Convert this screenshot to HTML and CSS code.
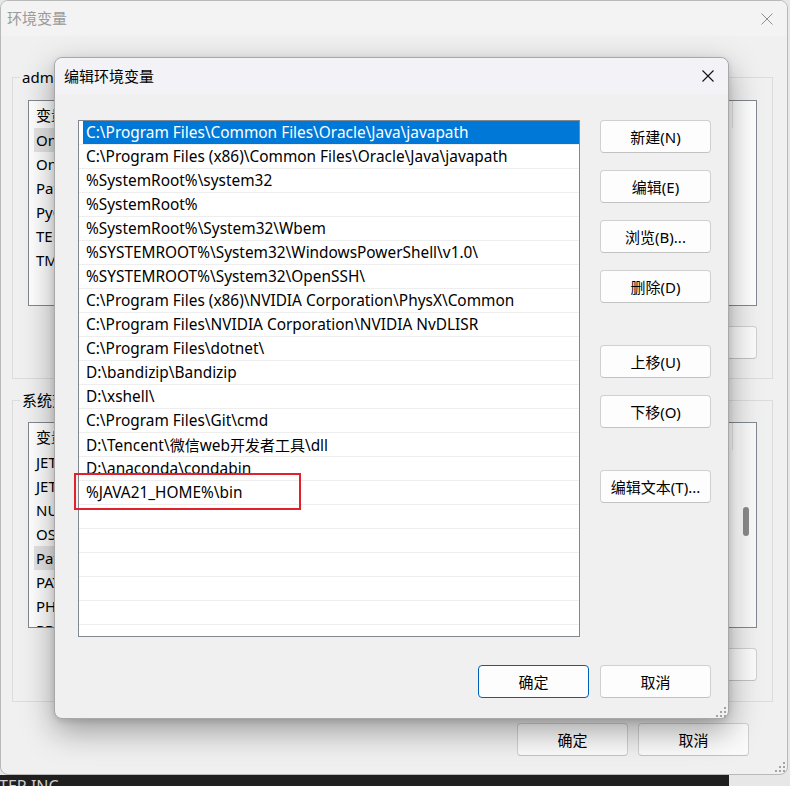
FILE: index.html
```html
<!DOCTYPE html>
<html lang="zh-CN">
<head>
<meta charset="utf-8">
<title>编辑环境变量</title>
<link rel="stylesheet" href="styles.css">
</head>
<body>
<div class="darkwin"><span class="darkwin-text">TER INC</span></div>

<div class="win bgwin">
  <div class="bg-titlebar">
    <span class="bg-title">环境变量</span>
    <svg class="x-icon bg-x" width="12" height="12" viewBox="0 0 12 12"><path d="M0.5 0.5 L11.5 11.5 M11.5 0.5 L0.5 11.5" stroke="currentColor" stroke-width="1" fill="none"/></svg>
  </div>
  <div class="bg-body">
    <fieldset class="group g1">
      <legend>administrator 的用户变量(U)</legend>
      <div class="lv">
        <div class="lv-main">
          <div class="lv-head"><span class="hc1">变量</span><span class="hc2">值</span></div>
          <div class="lv-row lv-sel">OneDrive</div>
          <div class="lv-row">OneDriveConsumer</div>
          <div class="lv-row">Path</div>
          <div class="lv-row">PyCharm</div>
          <div class="lv-row">TEMP</div>
          <div class="lv-row">TMP</div>
        </div>
      </div>
      <div class="btnrow">
        <button class="btn bgbtn">新建(N)...</button>
        <button class="btn bgbtn">编辑(E)...</button>
        <button class="btn bgbtn">删除(D)</button>
      </div>
    </fieldset>
    <fieldset class="group g2">
      <legend>系统变量(S)</legend>
      <div class="lv">
        <div class="lv-main">
          <div class="lv-head"><span class="hc1">变量</span><span class="hc2">值</span></div>
          <div class="lv-row">JETBRAINS_CLIENT_VM_OPTIONS</div>
          <div class="lv-row">JETBRAINSCLIENT_VM_OPTIONS</div>
          <div class="lv-row">NUMBER_OF_PROCESSORS</div>
          <div class="lv-row">OS</div>
          <div class="lv-row lv-sel">Path</div>
          <div class="lv-row">PATHEXT</div>
          <div class="lv-row">PHPSTORM_VM_OPTIONS</div>
          <div class="lv-row">PROCESSOR_ARCHITECTURE</div>
        </div>
        <div class="vscroll"><div class="thumb"></div></div>
      </div>
      <div class="btnrow">
        <button class="btn bgbtn">新建(W)...</button>
        <button class="btn bgbtn">编辑(I)...</button>
        <button class="btn bgbtn">删除(L)</button>
      </div>
    </fieldset>
    <div class="btnrow mainrow">
      <button class="btn bgbtn">确定</button>
      <button class="btn bgbtn">取消</button>
    </div>
  </div>
  <svg class="grip bg-grip" width="10" height="10" viewBox="0 0 10 10"><rect x="8" y="0" width="2" height="2"/><rect x="4" y="4" width="2" height="2"/><rect x="8" y="4" width="2" height="2"/><rect x="0" y="8" width="2" height="2"/><rect x="4" y="8" width="2" height="2"/><rect x="8" y="8" width="2" height="2"/></svg>
</div>

<div class="win dlg">
  <div class="dlg-titlebar">
    <span class="dlg-title">编辑环境变量</span>
    <svg class="x-icon dlg-x" width="12" height="12" viewBox="0 0 12 12"><path d="M0.5 0.5 L11.5 11.5 M11.5 0.5 L0.5 11.5" stroke="currentColor" stroke-width="1.1" fill="none"/></svg>
  </div>
  <div class="dlg-body">
    <div class="dlg-main">
      <div class="plist">
        <div class="prow psel">C:\Program Files\Common Files\Oracle\Java\javapath</div>
        <div class="prow">C:\Program Files (x86)\Common Files\Oracle\Java\javapath</div>
        <div class="prow">%SystemRoot%\system32</div>
        <div class="prow">%SystemRoot%</div>
        <div class="prow">%SystemRoot%\System32\Wbem</div>
        <div class="prow">%SYSTEMROOT%\System32\WindowsPowerShell\v1.0\</div>
        <div class="prow">%SYSTEMROOT%\System32\OpenSSH\</div>
        <div class="prow">C:\Program Files (x86)\NVIDIA Corporation\PhysX\Common</div>
        <div class="prow">C:\Program Files\NVIDIA Corporation\NVIDIA NvDLISR</div>
        <div class="prow">C:\Program Files\dotnet\</div>
        <div class="prow">D:\bandizip\Bandizip</div>
        <div class="prow">D:\xshell\</div>
        <div class="prow">C:\Program Files\Git\cmd</div>
        <div class="prow">D:\Tencent\<span class="cjk">微信</span>web<span class="cjk">开发者工具</span>\dll</div>
        <div class="prow">D:\anaconda\condabin</div>
        <div class="prow">%JAVA21_HOME%\bin</div>
        <div class="prow"></div>
        <div class="prow"></div>
        <div class="prow"></div>
        <div class="prow"></div>
        <div class="prow"></div>
        <div class="prow"></div>
      </div>
      <div class="side">
        <button class="btn">新建(N)</button>
        <button class="btn">编辑(E)</button>
        <button class="btn">浏览(B)...</button>
        <button class="btn">删除(D)</button>
        <button class="btn far">上移(U)</button>
        <button class="btn">下移(O)</button>
        <button class="btn far">编辑文本(T)...</button>
      </div>
    </div>
    <div class="dlg-foot">
      <button class="btn btn-default">确定</button>
      <button class="btn">取消</button>
    </div>
  </div>
  <svg class="grip dlg-grip" width="10" height="10" viewBox="0 0 10 10"><rect x="8" y="0" width="2" height="2"/><rect x="4" y="4" width="2" height="2"/><rect x="8" y="4" width="2" height="2"/><rect x="0" y="8" width="2" height="2"/><rect x="4" y="8" width="2" height="2"/><rect x="8" y="8" width="2" height="2"/></svg>
</div>

<div class="mark"></div>
</body>
</html>
```

FILE: styles.css
```css
* { box-sizing: border-box; }

html, body {
  margin: 0;
  padding: 0;
}

body {
  position: relative;
  width: 790px;
  height: 786px;
  overflow: hidden;
  background: #e7e7e7;
  font-family: "Noto Sans", "Noto Sans CJK SC", sans-serif;
  font-size: 15px;
  line-height: 20px;
  color: #000;
}

button {
  font: inherit;
  color: inherit;
}

/* dark window peeking below */
.darkwin {
  position: absolute;
  left: 0;
  top: 775px;
  width: 729px;
  height: 30px;
  background: #1f1f1f;
}
.darkwin-text {
  display: block;
  margin-left: -1px;
  color: #cfcfcf;
  font-size: 16px;
  line-height: 22px;
}

/* windows */
.win {
  position: absolute;
  background: #f0f0f0;
}

.bgwin {
  left: 0;
  top: 0;
  width: 788px;
  height: 775px;
  border: 1px solid #b9b9b9;
  border-radius: 8px;
  overflow: hidden;
}

.bg-titlebar {
  height: 35px;
  display: flex;
  align-items: center;
  justify-content: space-between;
  padding: 0 14px 0 6px;
  background: #f3f3f3;
  color: #9a9a9a;
}
.bg-title { margin-top: -1px; }
.bg-x { color: #8e8e8e; }

.bg-body {
  padding: 31px 14px 0 11px;
}

.group {
  margin: 0;
  min-width: 0;
  border: 1px solid #dcdcdc;
  padding: 13px 15px 19px 15px;
}
.group legend {
  margin-left: -8px;
  padding: 0 2px;
  line-height: 20px;
  color: #000;
}
.g2 {
  margin-top: 11px;
  padding-top: 12px;
  padding-bottom: 20px;
}

.lv {
  height: 206px;
  background: #fff;
  border: 1px solid #828790;
  display: flex;
  overflow: hidden;
}
.lv-main {
  flex: 1;
  min-width: 0;
}
.lv-head {
  height: 27px;
  display: flex;
  align-items: center;
}
.hc1 {
  width: 180px;
  padding-left: 7px;
}
.hc2 {
  width: 524px;
  height: 27px;
  line-height: 27px;
  padding-left: 6px;
  border-left: 1px solid #e5e5e5;
  border-right: 1px solid #e5e5e5;
}
.lv-row {
  width: 175px;
  height: 24px;
  line-height: 24px;
  margin-left: 5px;
  padding-left: 2px;
  white-space: nowrap;
  overflow: hidden;
}
.lv-sel {
  background: #e5e5e5;
}
.vscroll {
  width: 16px;
  background: #fafafa;
  padding: 84px 0 0 3px;
}
.thumb {
  width: 6px;
  height: 29px;
  background: #8a8a8a;
  border-radius: 3px;
}

.btnrow {
  display: flex;
  justify-content: flex-end;
  gap: 10px;
  margin-top: 20px;
}
.mainrow {
  margin-top: 21px;
  margin-right: 24px;
}

.btn {
  width: 111px;
  height: 33px;
  padding: 0;
  background: #fdfdfd;
  border: 1px solid #d0d0d0;
  border-bottom-color: #c2c2c2;
  border-radius: 4px;
  line-height: 20px;
  text-align: center;
  white-space: nowrap;
}
.bgbtn {
  background: #fbfbfb;
}
.btn-default {
  border: 1px solid #005fb8;
}

.grip {
  position: absolute;
  fill: #a3a3a3;
}
.bg-grip { right: 2px; bottom: 2px; }
.dlg-grip { right: 2px; bottom: 1px; }

/* front dialog */
.dlg {
  left: 54px;
  top: 57px;
  width: 675px;
  height: 662px;
  border: 1px solid #a8a8a8;
  border-radius: 8px;
  box-shadow: 0 12px 32px rgba(0, 0, 0, 0.36), 0 2px 6px rgba(0, 0, 0, 0.12);
  display: flex;
  flex-direction: column;
}
.dlg-titlebar {
  height: 36px;
  flex: none;
  display: flex;
  align-items: center;
  justify-content: space-between;
  padding: 0 14px 0 9px;
  background: #f3f3f7;
  border-radius: 8px 8px 0 0;
}
.dlg-x { color: #111; }

.dlg-body {
  flex: 1;
  display: flex;
  flex-direction: column;
  padding: 26px 17px 0 23px;
}
.dlg-main {
  display: flex;
  gap: 20px;
}
.plist {
  width: 502px;
  height: 517px;
  background: #fff;
  border: 1px solid #828790;
  overflow: hidden;
}
.prow {
  height: 24px;
  line-height: 24px;
  padding-left: 7px;
  border-bottom: 1px solid #eeeeee;
  white-space: nowrap;
  font-size: 15.4px;
}
.prow .cjk {
  font-size: 15px;
}
.psel {
  background: linear-gradient(to right, transparent 4px, #0078d7 4px);
  background-clip: padding-box;
  color: #fff;
}
.side {
  width: 111px;
  display: flex;
  flex-direction: column;
  gap: 17px;
}
.side .far {
  margin-top: 25px;
}
.dlg-foot {
  display: flex;
  justify-content: flex-end;
  gap: 11px;
  margin-top: 28px;
}

.mark {
  position: absolute;
  left: 74px;
  top: 473px;
  width: 227px;
  height: 37px;
  border: 2px solid #e3212b;
}
```
